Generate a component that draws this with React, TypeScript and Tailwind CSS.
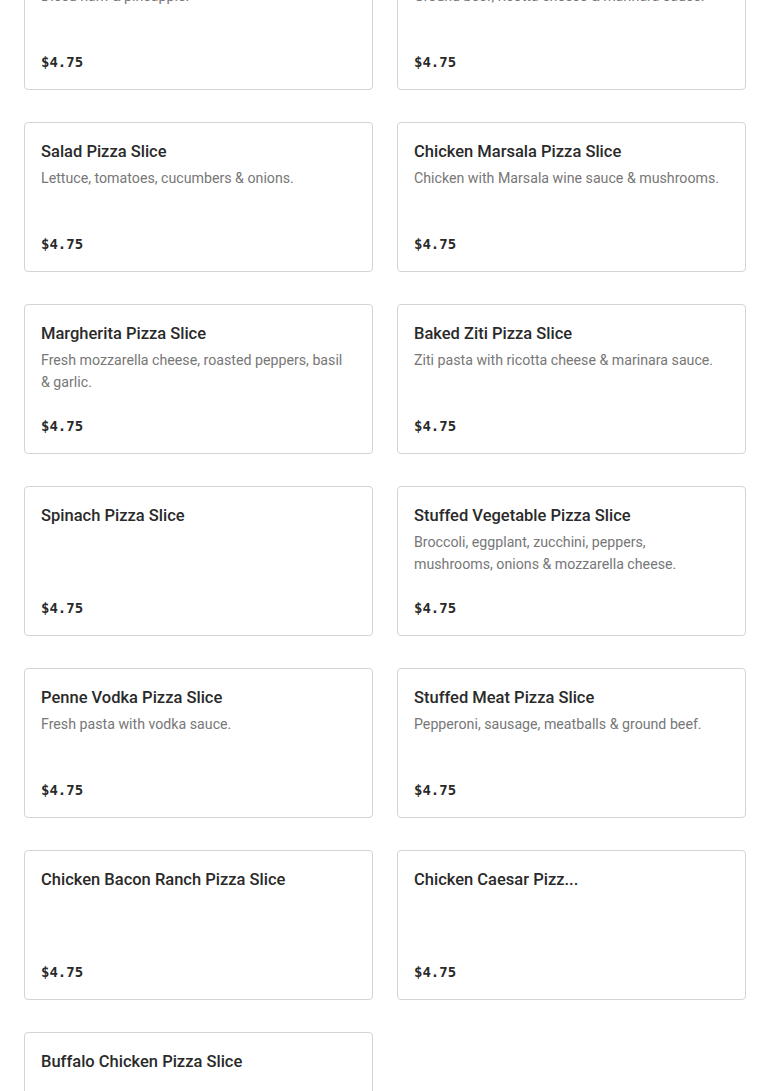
const items = [
  { name: 'Hawaiian Pizza Slice', desc: 'Diced ham & pineapple.' },
  { name: 'Lasagna Pizza Slice', desc: 'Ground beef, ricotta cheese & marinara sauce.' },
  { name: 'Salad Pizza Slice', desc: 'Lettuce, tomatoes, cucumbers & onions.' },
  { name: 'Chicken Marsala Pizza Slice', desc: 'Chicken with Marsala wine sauce & mushrooms.' },
  { name: 'Margherita Pizza Slice', desc: 'Fresh mozzarella cheese, roasted peppers, basil & garlic.' },
  { name: 'Baked Ziti Pizza Slice', desc: 'Ziti pasta with ricotta cheese & marinara sauce.' },
  { name: 'Spinach Pizza Slice', desc: '' },
  { name: 'Stuffed Vegetable Pizza Slice', desc: 'Broccoli, eggplant, zucchini, peppers, mushrooms, onions & mozzarella cheese.' },
  { name: 'Penne Vodka Pizza Slice', desc: 'Fresh pasta with vodka sauce.' },
  { name: 'Stuffed Meat Pizza Slice', desc: 'Pepperoni, sausage, meatballs & ground beef.' },
  { name: 'Chicken Bacon Ranch Pizza Slice', desc: '' },
  { name: 'Chicken Caesar Pizz...', desc: '' },
  { name: 'Buffalo Chicken Pizza Slice', desc: '' },
];

function MenuCard({ name, desc }: { name: string; desc: string }) {
  return (
    <div className="h-[150px] rounded border border-[#d4d4d4] bg-white px-4 pt-[17px] pb-[15px] flex flex-col">
      <h3 className="text-[16.5px] leading-6 font-medium text-[#2a2a2a] truncate">{name}</h3>
      {desc && (
        <p className="mt-[3px] pr-2 text-[14.2px] leading-[22px] text-[#777777]">{desc}</p>
      )}
      <p className="mt-auto text-[14px] leading-6 font-bold text-[#2a2a2a] font-['DejaVu_Sans_Mono',monospace]">
        $4.75
      </p>
    </div>
  );
}

export default function App() {
  return (
    <div className="min-h-screen bg-white font-['Roboto',sans-serif] overflow-hidden">
      {/* menu grid, scrolled partway */}
      <div className="-mt-[60px] px-6 grid grid-cols-2 gap-x-6 gap-y-8">
        {items.map((it) => (
          <MenuCard key={it.name} {...it} />
        ))}
      </div>
    </div>
  );
}
